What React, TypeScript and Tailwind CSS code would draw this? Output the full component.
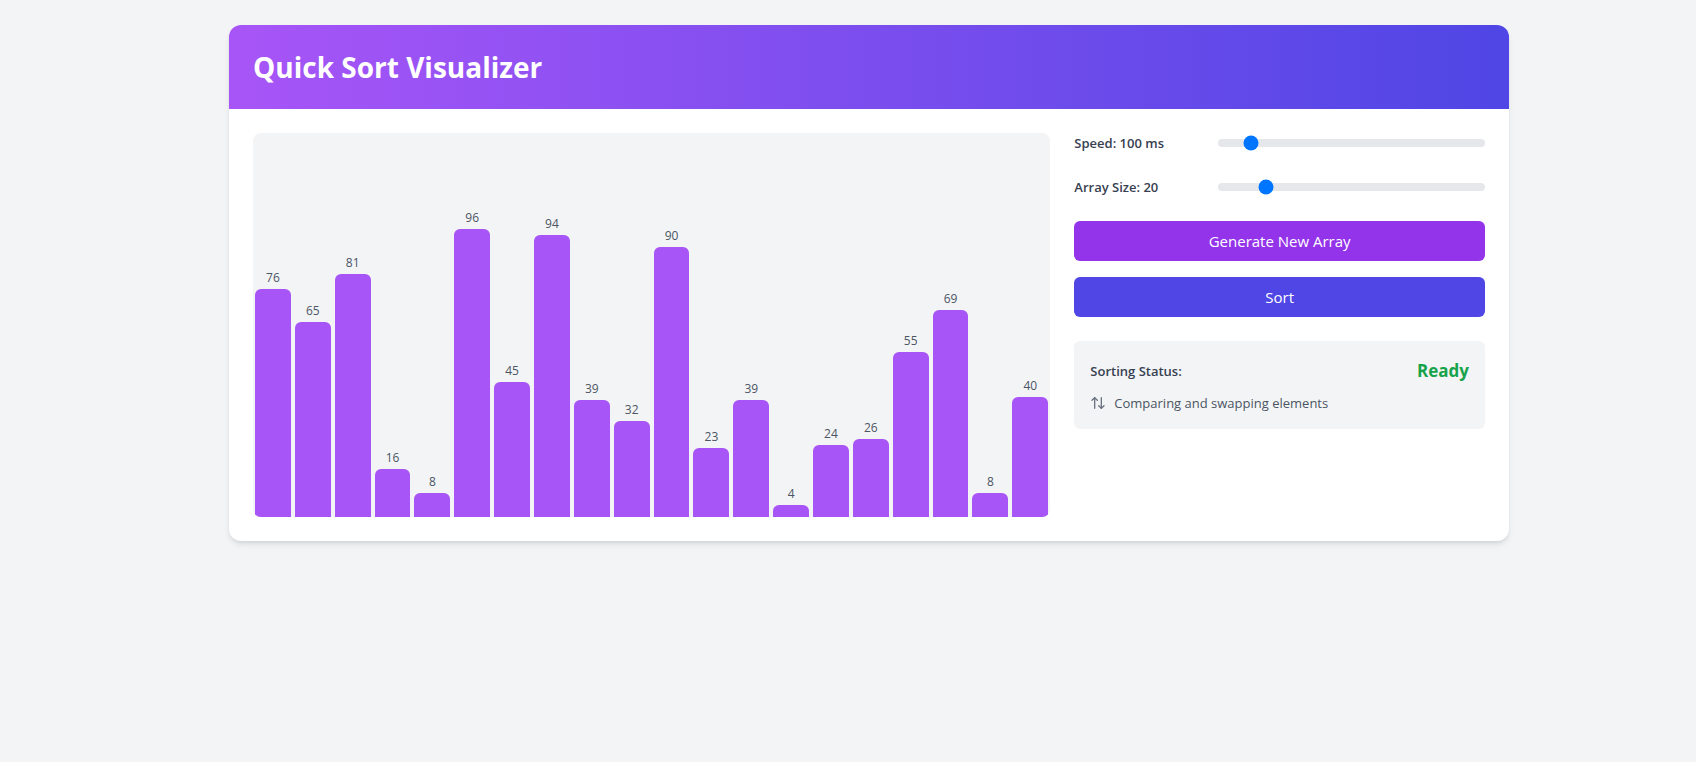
import { useEffect, useRef, useState } from "react";
import { ArrowUpDown } from "lucide-react";

const INITIAL = [76, 65, 81, 16, 8, 96, 45, 94, 39, 32, 90, 23, 39, 4, 24, 26, 55, 69, 8, 40];

const randomArray = (size: number) =>
  Array.from({ length: size }, () => Math.floor(Math.random() * 100) + 1);

// Records the array after every swap made by quick sort.
function quickSortSteps(source: number[]): number[][] {
  const a = [...source];
  const steps: number[][] = [];
  const swap = (i: number, j: number) => {
    if (i === j) return;
    [a[i], a[j]] = [a[j], a[i]];
    steps.push([...a]);
  };
  const sort = (low: number, high: number) => {
    if (low >= high) return;
    let i = low;
    for (let j = low; j < high; j++) {
      if (a[j] < a[high]) swap(i++, j);
    }
    swap(i, high);
    sort(low, i - 1);
    sort(i + 1, high);
  };
  sort(0, a.length - 1);
  return steps;
}

interface SliderProps {
  id: string;
  label: string;
  min: number;
  max: number;
  value: number;
  disabled?: boolean;
  onChange: (value: number) => void;
}

function Slider({ id, label, min, max, value, disabled, onChange }: SliderProps) {
  return (
    <div className="flex items-center">
      <label htmlFor={id} className="w-36 shrink-0 text-[13px] leading-5 font-semibold text-[#374151]">
        {label}
      </label>
      <input
        id={id}
        type="range"
        min={min}
        max={max}
        value={value}
        disabled={disabled}
        onChange={(e) => onChange(Number(e.target.value))}
        className="h-2 min-w-0 flex-1 cursor-pointer appearance-none rounded-lg bg-[#e5e7eb]"
      />
    </div>
  );
}

function Bars({ values }: { values: number[] }) {
  return (
    <div className="flex h-96 items-end overflow-hidden rounded-lg bg-[#f3f4f6]">
      {values.map((value, i) => (
        <div key={i} className="mx-0.5 flex min-w-0 flex-1 flex-col items-stretch">
          <span className="mb-[3px] text-center text-xs text-[#4b5563]">{value}</span>
          <div className="rounded-t-md bg-[#a855f7]" style={{ height: value * 3 }} />
        </div>
      ))}
    </div>
  );
}

export default function App() {
  const [values, setValues] = useState(INITIAL);
  const [speed, setSpeed] = useState(100);
  const [sorting, setSorting] = useState(false);
  const timer = useRef<number | undefined>(undefined);

  useEffect(() => () => window.clearTimeout(timer.current), []);

  const startSort = () => {
    const steps = quickSortSteps(values);
    setSorting(true);
    const play = (i: number) => {
      if (i >= steps.length) {
        setSorting(false);
        return;
      }
      setValues(steps[i]);
      timer.current = window.setTimeout(() => play(i + 1), speed);
    };
    play(0);
  };

  return (
    <div className="min-h-screen bg-[#f3f4f6] pt-[25px] pb-6 pl-[42px] font-['Open_Sans','Noto_Sans',sans-serif]">
      <main className="mx-auto max-w-7xl overflow-hidden rounded-xl bg-white shadow-md">
        <header className="bg-[linear-gradient(to_right,#a855f7,#4f46e5)] p-6">
          <h1 className="text-[28px] leading-9 font-bold text-white">Quick Sort Visualizer</h1>
        </header>
        <div className="flex p-6">
          <section className="w-2/3 pr-6">
            <Bars values={values} />
          </section>
          <section className="flex w-1/3 flex-col gap-6">
            <Slider
              id="speed"
              label={`Speed: ${speed} ms`}
              min={1}
              max={1000}
              value={speed}
              disabled={sorting}
              onChange={setSpeed}
            />
            <Slider
              id="size"
              label={`Array Size: ${values.length}`}
              min={5}
              max={100}
              value={values.length}
              disabled={sorting}
              onChange={(size) => setValues(randomArray(size))}
            />
            <div className="flex flex-col gap-4">
              <button
                type="button"
                disabled={sorting}
                onClick={() => setValues(randomArray(values.length))}
                className="rounded-md bg-[#9333ea] px-4 py-2 text-[15px] leading-6 text-white hover:bg-[#7e22ce]"
              >
                Generate New Array
              </button>
              <button
                type="button"
                disabled={sorting}
                onClick={startSort}
                className="rounded-md bg-[#4f46e5] px-4 py-2 text-[15px] leading-6 text-white hover:bg-[#4338ca]"
              >
                Sort
              </button>
            </div>
            <div className="flex flex-col gap-2 rounded-md bg-[#f3f4f6] p-4">
              <div className="flex items-center justify-between">
                <span className="text-[13px] leading-5 font-semibold text-[#374151]">Sorting Status:</span>
                <span className="text-[17px] leading-7 font-bold text-[#16a34a]">
                  {sorting ? "Sorting..." : "Ready"}
                </span>
              </div>
              <div className="flex items-center gap-2 text-[13px] leading-5 text-[#4b5563]">
                <ArrowUpDown className="size-4 text-[#6b7280]" />
                <span>Comparing and swapping elements</span>
              </div>
            </div>
          </section>
        </div>
      </main>
    </div>
  );
}
